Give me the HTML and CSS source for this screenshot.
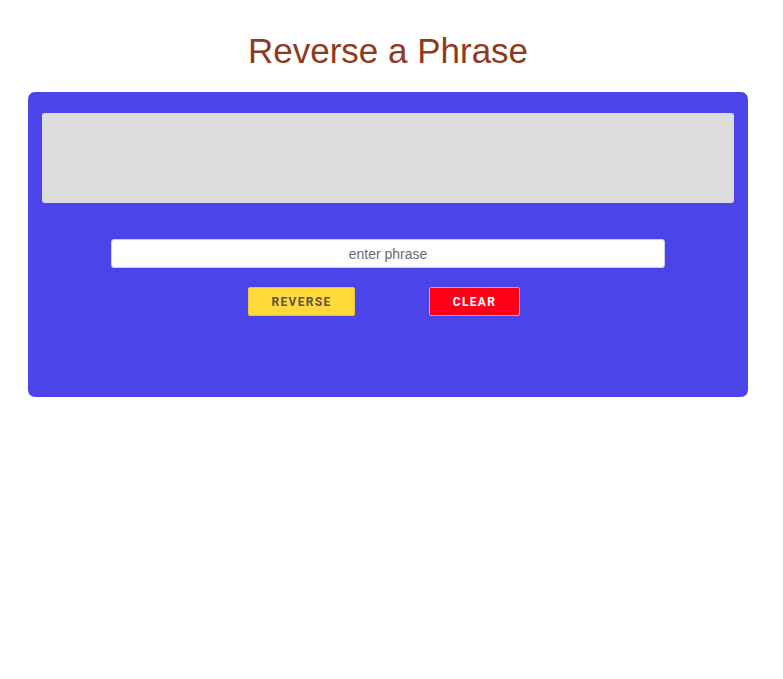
FILE: index.html
```html
<!DOCTYPE html>
<html>
<head>
<meta charset="utf-8">
<link rel="stylesheet" href="styles.css">
</head>
<body>
<h1 class="title">Reverse a Phrase</h1>
<div class="card">
  <div class="output"></div>
  <div class="controls">
    <input class="phrase" type="text" placeholder="enter phrase">
    <div class="buttons">
      <button class="btn btn-reverse">REVERSE</button>
      <button class="btn btn-clear">CLEAR</button>
    </div>
  </div>
</div>
</body>
</html>
```
FILE: styles.css
```css
html, body {
  margin: 0;
  padding: 0;
  background: #fff;
  font-family: "Liberation Sans", Arial, sans-serif;
}
body {
  padding: 0 35px 0 28px;
}
.title {
  margin: 0 0 21px 0;
  padding-top: 31px;
  text-align: center;
  font-size: 35px;
  font-weight: normal;
  color: #8f3a1e;
  line-height: 40px;
}
.card {
  width: 720px;
  height: 305px;
  box-sizing: border-box;
  background: #4b44eb;
  border-radius: 7px;
  padding: 21px 14px 0 14px;
}
.output {
  height: 90px;
  background: #dddddd;
  border-radius: 3px;
}
.controls {
  display: flex;
  flex-direction: column;
  align-items: center;
  padding-top: 36px;
}
.phrase {
  width: 554px;
  height: 29px;
  box-sizing: border-box;
  border: 1px solid #cfcfd6;
  border-radius: 3px;
  background: #fff;
  text-align: center;
  font-family: "Liberation Sans", Arial, sans-serif;
  font-size: 14px;
  color: #333;
  outline: none;
  padding: 0;
}
.phrase::placeholder {
  color: #6b6b6b;
}
.buttons {
  display: flex;
  gap: 74px;
  margin-top: 19px;
  margin-right: 8px;
}
.btn {
  height: 29px;
  box-sizing: border-box;
  border-radius: 2px;
  font-family: "Roboto", "Liberation Sans", sans-serif;
  font-weight: bold;
  font-size: 12px;
  letter-spacing: 1.3px;
  padding: 0;
  cursor: pointer;
}
.btn-reverse {
  width: 107px;
  background: #ffda3a;
  border: 1px solid #e8c23a;
  color: #5a5346;
}
.btn-clear {
  width: 91px;
  background: #ff0019;
  border: 1px solid #ff8a9a;
  color: #ffffff;
}
```
